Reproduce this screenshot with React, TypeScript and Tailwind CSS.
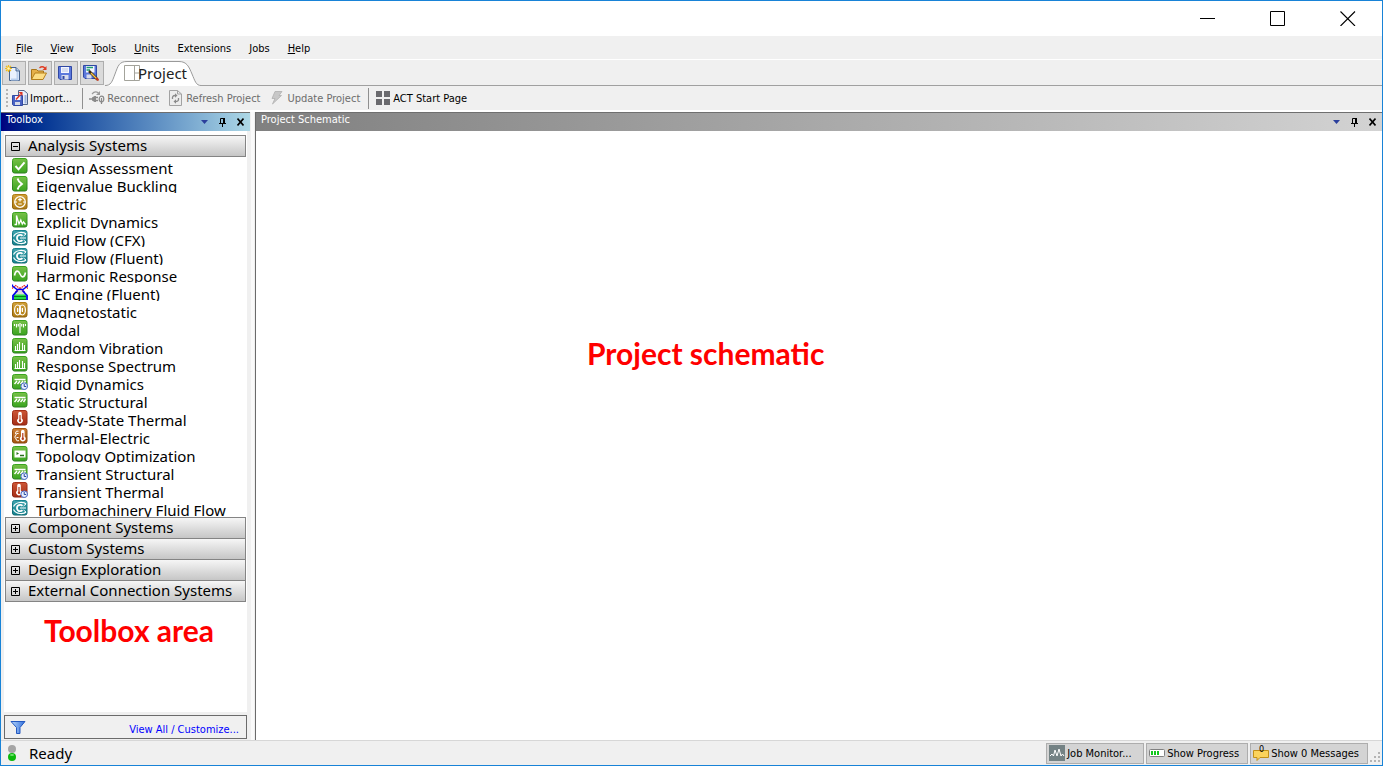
import React, { ReactNode } from "react";

type SystemIcon =
  | "check" | "chevron" | "electric" | "explicit" | "fluid" | "harmonic" | "engine" | "magnet" | "modal"
  | "bars" | "rigid" | "static" | "thermal" | "thermoelectric" | "topology" | "transientThermal";

const analysisSystems: { label: string; icon: SystemIcon }[] = [
  { label: "Design Assessment", icon: "check" },
  { label: "Eigenvalue Buckling", icon: "chevron" },
  { label: "Electric", icon: "electric" },
  { label: "Explicit Dynamics", icon: "explicit" },
  { label: "Fluid Flow (CFX)", icon: "fluid" },
  { label: "Fluid Flow (Fluent)", icon: "fluid" },
  { label: "Harmonic Response", icon: "harmonic" },
  { label: "IC Engine (Fluent)", icon: "engine" },
  { label: "Magnetostatic", icon: "magnet" },
  { label: "Modal", icon: "modal" },
  { label: "Random Vibration", icon: "bars" },
  { label: "Response Spectrum", icon: "bars" },
  { label: "Rigid Dynamics", icon: "rigid" },
  { label: "Static Structural", icon: "static" },
  { label: "Steady-State Thermal", icon: "thermal" },
  { label: "Thermal-Electric", icon: "thermoelectric" },
  { label: "Topology Optimization", icon: "topology" },
  { label: "Transient Structural", icon: "rigid" },
  { label: "Transient Thermal", icon: "transientThermal" },
  { label: "Turbomachinery Fluid Flow", icon: "fluid" },
];

const collapsedGroups = ["Component Systems", "Custom Systems", "Design Exploration", "External Connection Systems"];

function Clock() {
  return (
    <g>
      <circle cx="12.2" cy="12.2" r="3.3" fill="#e8effd" stroke="#4a6cd0" />
      <path d="M12.2 10V12.5H14.200" stroke="#24479f" fill="none" />
    </g>
  );
}

function Thermometer({ x }: { x: number }) {
  return (
    <g transform={`translate(${x} 0)`}>
      <path d="M-1.8 3.5a1.8 1.8 0 0 1 3.6 0V8.4a2.8 2.8 0 1 1-3.6 0z" fill="#fff" />
      <path d="M0 5V10.5" stroke="#b23a1c" strokeWidth="1.2" />
      <circle cx="0" cy="10.7" r="1.2" fill="#b23a1c" />
    </g>
  );
}

const hatch = (
  <path d="M2.5 5.5H13.5M2.500 10l2.5-3M5.500 10l2.5-3M8.500 10l2.5-3M11.500 10l2-3" stroke="#fff" strokeWidth="1.4" fill="none" />
);

const glyphs: Record<SystemIcon, { color: string; art: ReactNode }> = {
  check: { color: "green", art: <path d="M3.5 8l3 3.3 6-7" stroke="#fff" strokeWidth="2" fill="none" /> },
  chevron: { color: "green", art: <path d="M5.5 2.5l1.5 3 3 2.5-3 2.5-1.5 3" stroke="#fff" strokeWidth="1.8" fill="none" /> },
  electric: {
    color: "gold",
    art: (
      <g stroke="#fff" fill="none">
        <circle cx="8" cy="8" r="5.300" strokeWidth="1.200" />
        <path d="M8 4V7.400M6.200 5.600H9.800M6.200 10H9.800M3 8H5M11 8H13" strokeWidth="1.200" />
      </g>
    ),
  },
  explicit: { color: "green", art: <path d="M2.500 12.500H4.500V3.500L7 12l1.800-4 1.500 4 1.200-2 2 2.500" stroke="#fff" strokeWidth="1.3" fill="none" /> },
  fluid: {
    color: "teal",
    art: (
      <g stroke="#fff" fill="none">
        <path d="M1.500 6.500Q3.500 2.800 8 2.500T14 4M1.500 9.500Q3.500 13.200 8 13.500T14 12" strokeWidth="1.200" />
        <path d="M10.500 5.800A3.200 3.200 0 1 0 10.500 10.200" strokeWidth="1.800" />
        <path d="M8 8H14M11.500 6L14 4M11.500 10L14 12" />
      </g>
    ),
  },
  harmonic: { color: "green", art: <path d="M2.5 9.5C3.5 4 6.2 3.8 8 8s4.500 3.800 5.500-1.500" stroke="#fff" strokeWidth="1.6" fill="none" /> },
  engine: { color: "none", art: null },
  magnet: {
    color: "gold",
    art: (
      <g stroke="#fff" fill="none" strokeWidth="1.200">
        <ellipse cx="5.600" cy="8" rx="3" ry="5" />
        <ellipse cx="10.400" cy="8" rx="3" ry="5" />
        <path d="M8 3V13M5.600 6V10M10.400 6V10" />
      </g>
    ),
  },
  modal: { color: "green", art: <path d="M2.500 4V6M4.500 4V7.500M6.300 4V6.500M8 3V13M9.700 4V6.500M11.500 4V7.500M13.500 4V6" stroke="#fff" fill="none" strokeWidth="1.100" /> },
  bars: { color: "green", art: <path d="M3.500 8V12M5.500 6V12M7.500 4V12M10.500 5V12M12.500 7V12M2.500 12.500H13.500" stroke="#fff" fill="none" strokeWidth="1.100" /> },
  rigid: { color: "green", art: <>{hatch}<Clock /></> },
  static: { color: "green", art: hatch },
  thermal: { color: "red", art: <Thermometer x={8} /> },
  thermoelectric: {
    color: "orange",
    art: (
      <g>
        <path d="M6.500 3.200a2.300 2.300 0 0 0-3 1.800q0 1.200 1 1.800-2 .8-1.500 2.700.2 1 1.200 1.200-.5 1.500 1 2H7" stroke="#fff" fill="none" />
        <path d="M4.500 5.500H6.500M4.500 9.500H6.500" stroke="#fff" />
        <Thermometer x={10.8} />
      </g>
    ),
  },
  topology: {
    color: "green",
    art: (
      <g>
        <path d="M2.500 4.500H13.500V11.500H2.500z" fill="#fff" />
        <path d="M4.500 6l2.500 1.500-2.500 1.500z" fill="#276f18" />
        <path d="M8 9.500H12" stroke="#276f18" strokeWidth="1.500" />
      </g>
    ),
  },
  transientThermal: { color: "red", art: <><Thermometer x={7} /><Clock /></> },
};

function SystemGlyph({ icon }: { icon: SystemIcon }) {
  if (icon === "engine") {
    return (
      <svg className="size-4 shrink-0" viewBox="0 0 16 16" aria-hidden="true">
        <path d="M2 11L5.500 7H10.500L14 11z" fill="#d8dcd8" />
        <path d="M0 4.500L3.500 1.500 8 4.500 12.500 8M16 4.500L12.500 1.500 8 4.500 3.500 8" stroke="#f02020" strokeWidth="1.300" strokeDasharray="1.500 0.600" fill="none" />
        <path d="M.5 .5V2L5 5.500H11L15.500 2V.5" stroke="#0000f0" strokeWidth="1.300" fill="none" />
        <path d="M2 10.500H14V16H2z" fill="#22dc48" />
        <path d="M2 12.500H14M2 15.500H14" stroke="#087a20" />
        <path d="M1 16V11.500L5.500 6.500M15 16V11.500L10.500 6.500" stroke="#0000f0" strokeWidth="1.800" fill="none" />
      </svg>
    );
  }
  const { color, art } = glyphs[icon];
  return (
    <svg className="size-4 shrink-0" viewBox="0 0 16 16" aria-hidden="true">
      <rect x="0.500" y="0.500" width="14.500" height="14.500" rx="2" fill={`url(#tile-${color})`} stroke={`url(#edge-${color})`} />
      {art}
    </svg>
  );
}

const tiles = [
  ["green", "#78c048", "#3aa51f", "#2b7c1f"],
  ["gold", "#d0a03a", "#b07c12", "#8a5c0c"],
  ["teal", "#3fa3ac", "#178390", "#0f6670"],
  ["red", "#cc5636", "#a62e16", "#862010"],
  ["orange", "#cc7c32", "#a4560e", "#84440c"],
];

function TileGradients() {
  return (
    <svg className="absolute size-0" aria-hidden="true">
      <defs>
        {tiles.map(([name, top, bottom, edge]) => (
          <React.Fragment key={name}>
            <linearGradient id={`tile-${name}`} x1="0" y1="0" x2="0" y2="1">
              <stop offset="0" stopColor={top} />
              <stop offset="1" stopColor={bottom} />
            </linearGradient>
            <linearGradient id={`edge-${name}`} x1="0" y1="0" x2="0" y2="1">
              <stop offset="0" stopColor={bottom} />
              <stop offset="1" stopColor={edge} />
            </linearGradient>
          </React.Fragment>
        ))}
      </defs>
    </svg>
  );
}

function NewIcon() {
  return (
    <svg className="size-4" viewBox="0 0 16 16" aria-hidden="true">
      <path d="M4.500 2.500H11L14.500 6V15.500H4.500z" fill="#eaf2fd" stroke="#47648e" />
      <path d="M12.500 7V14.500H6" stroke="#b9d0ee" strokeWidth="2" fill="none" />
      <path d="M11 2.500V6H14.500" fill="#b6cdec" stroke="#47648e" />
      <path d="M3.500 0V7M0 3.500H7M1 1L6 6M6 1L1 6" stroke="#f0bb1c" strokeWidth="1.200" />
      <circle cx="3.500" cy="3.500" r="1.300" fill="#fff6b8" />
    </svg>
  );
}

function OpenIcon() {
  return (
    <svg className="size-4" viewBox="0 0 16 16" aria-hidden="true">
      <path d="M.5 14.500V4.500H5.500L7 6H12.500V8" fill="#e5b04a" stroke="#a87418" />
      <path d="M.5 14.500L4 8H15.500L12 14.500z" fill="#fcdd84" stroke="#b5801c" />
      <path d="M8.500 3Q11 .5 14 3" stroke="#e03a20" strokeWidth="1.200" fill="none" />
      <path d="M15.500 1V5H11.500z" fill="#e03a20" />
    </svg>
  );
}

function SaveIcon() {
  return (
    <svg className="size-4" viewBox="0 0 16 16" aria-hidden="true">
      <path d="M1.500 1.500H14.500V14.500H3L1.500 13z" fill="#5b78dc" stroke="#3048a4" />
      <path d="M4 2H12V8H4z" fill="#f4f6ff" />
      <path d="M5 4H11M5 6H11" stroke="#b9c4e4" />
      <path d="M4.500 10H11.500V14.500H4.500z" fill="#d8dcec" />
      <path d="M5.500 11H7.500V14H5.500z" fill="#3048a4" />
    </svg>
  );
}

function SaveAsIcon() {
  return (
    <svg className="size-4" viewBox="0 0 16 16" aria-hidden="true">
      <path d="M.5 .5H13.500V13.500H2L.5 12z" fill="#5b78dc" stroke="#3048a4" />
      <path d="M3 1H11.500V7.500H3z" fill="#f4f6ff" />
      <path d="M3.500 9.500H8.500V13.500H3.500z" fill="#d8dcec" />
      <path d="M3.500 2.500H10M3.500 5H7" stroke="#1c9a72" strokeWidth="1.500" />
      <path d="M6 6L14.500 14.500" stroke="#3a2a10" strokeWidth="2.500" />
      <path d="M8 8L13.500 13.500" stroke="#f3c04a" strokeWidth="1.500" />
      <path d="M13 13L15.500 15.500" stroke="#c83c20" strokeWidth="2" />
    </svg>
  );
}

function ImportIcon() {
  return (
    <svg className="size-4" viewBox="0 0 16 16" aria-hidden="true">
      <path d="M6.500 .5H12L15.500 3.500V14.500H6.500z" fill="#e8effb" stroke="#51658c" />
      <path d="M13.500 5V13.500" stroke="#9db3dc" strokeWidth="2" />
      <path d="M.5 5.500H10.500V15.500H1.500L.5 14.500z" fill="#4a63c4" stroke="#3048a4" />
      <path d="M3 6H8.500V10H3z" fill="#f4f6ff" />
      <path d="M3 12H8V15H3z" fill="#d4d8e6" />
      <path d="M4 9.500L8.500 4.500" stroke="#df3420" strokeWidth="1.500" />
      <path d="M6.500 2H10.500V6z" fill="#df3420" />
    </svg>
  );
}

function ReconnectIcon() {
  return (
    <svg className="size-4" viewBox="0 0 16 16" fill="none" aria-hidden="true">
      <path d="M3 4Q6 .5 9.500 3" stroke="#9a9a9a" strokeWidth="1.200" />
      <path d="M11 1V5H7z" fill="#9a9a9a" />
      <path d="M0 9H3M7 7.500H9M7 10.500H9" stroke="#8a8a8a" strokeWidth="1.300" />
      <path d="M7 6H5.500L3 7.500V10.500L5.500 12H7z" fill="#8a8a8a" />
      <ellipse cx="12.500" cy="9" rx="2.300" ry="2.800" stroke="#8a8a8a" strokeWidth="1.200" />
      <path d="M12.500 8V14" stroke="#8a8a8a" strokeWidth="1.200" />
    </svg>
  );
}

function RefreshIcon() {
  return (
    <svg className="size-4" viewBox="0 0 16 16" fill="none" aria-hidden="true">
      <path d="M1.500 .5H9.500L13.500 4V15.500H1.500z" fill="#ececec" stroke="#a2a2a2" />
      <path d="M9.500 .5V4H13.500" stroke="#a2a2a2" />
      <path d="M4.500 9Q4 5.500 7 5.500M10.500 8Q11 11.500 8 11.500" stroke="#8a8a8a" strokeWidth="1.300" />
      <path d="M7 3.300L9.500 5.500 7 7.700zM8 9.300L5.500 11.500 8 13.700z" fill="#8a8a8a" />
    </svg>
  );
}

function UpdateIcon() {
  return (
    <svg className="size-4" viewBox="0 0 16 16" aria-hidden="true">
      <path d="M6 1.500H13L10 5.500H12.500L3.500 14 6 8.500H3z" fill="#c8c8c8" stroke="#b0b0b0" strokeWidth="0.800" />
    </svg>
  );
}

function ActIcon() {
  return (
    <svg className="size-4" viewBox="0 0 16 16" fill="#6a6a6e" aria-hidden="true">
      <path d="M1 1H7V7H1zM9 1H15V7H9zM1 9H7V15H1zM9 9H15V15H9z" />
    </svg>
  );
}

function ExpandGlyph({ open }: { open: boolean }) {
  return (
    <svg className="size-[9px] shrink-0" viewBox="0 0 9 9" fill="none" stroke="#000" aria-hidden="true">
      <path d="M.5 .5H8.500V8.500H.5z" />
      <path d={open ? "M2 4.500H7" : "M2 4.500H7M4.500 2V7"} />
    </svg>
  );
}

function PanelControls({ name }: { name: string }) {
  return (
    <div className="flex items-center gap-2">
      <button aria-label={`${name} options`} className="flex size-[10px] items-center justify-center">
        <svg className="h-1 w-[7px]" viewBox="0 0 7 4" aria-hidden="true">
          <path d="M0 0H7L3.500 4z" fill="#2b3f9c" />
        </svg>
      </button>
      <button aria-label={`Pin ${name}`} className="flex size-[10px] items-center justify-center">
        <svg className="h-[9px] w-[7px]" viewBox="0 0 7 9" fill="none" stroke="#000" aria-hidden="true">
          <path d="M1.500 5V.5H5M0 5.500H7M3.500 6V9" />
          <path d="M5 0V5" strokeWidth="2" />
        </svg>
      </button>
      <button aria-label={`Close ${name}`} className="flex size-[10px] items-center justify-center">
        <svg className="h-2 w-[7px]" viewBox="0 0 7 8" stroke="#000" strokeWidth="1.600" aria-hidden="true">
          <path d="M.5 .5L6.500 7.500M6.500 .5L.5 7.500" />
        </svg>
      </button>
    </div>
  );
}

function GroupHeader({ label, open = false }: { label: string; open?: boolean }) {
  return (
    <button
      aria-expanded={open}
      className="flex h-[22px] w-full items-center gap-2 border border-[#848484] bg-linear-to-b from-[#f6f6f6] to-[#c6c6c6] pl-[5px] text-left font-['Noto_Sans',sans-serif] text-[15px] leading-[18px]"
    >
      <ExpandGlyph open={open} />
      <span className="pb-[2px] whitespace-nowrap">{label}</span>
    </button>
  );
}

function IconButton({ label, children }: { label: string; children: ReactNode }) {
  return (
    <button aria-label={label} className="flex size-6 items-center justify-center border border-[#adadad] bg-[#dadada] pr-[2px]">
      {children}
    </button>
  );
}

function ToolButton({ label, icon, disabled = false }: { label: string; icon: ReactNode; disabled?: boolean }) {
  return (
    <button disabled={disabled} className="flex items-center gap-[2px] whitespace-nowrap disabled:text-[#6d6d6d]">
      {icon}
      <span className="pt-[2px]">{label}</span>
    </button>
  );
}

function StatusButton({ label, icon }: { label: string; icon: ReactNode }) {
  return (
    <button className="flex h-[21px] min-w-[98px] items-center gap-[2px] border border-[#adadad] bg-[#d4d4d4] pr-2 pl-[2px] whitespace-nowrap">
      {icon}
      <span className="pt-[2px]">{label}</span>
    </button>
  );
}

const menus = ["File", "View", "Tools", "Units", "Extensions", "Jobs", "Help"];
const menusWithoutMnemonic = ["Extensions", "Jobs"];

export default function App() {
  return (
    <div className="flex h-screen flex-col border border-[#1883d7] bg-[#f0f0f0] font-['DejaVu_Sans_Condensed','Noto_Sans',sans-serif] text-[11px] leading-4 text-black">
      <TileGradients />
      <header className="flex h-[35px] shrink-0 items-center justify-end gap-[54px] bg-white pr-[26px] pb-[2px]">
        <button aria-label="Minimize">
          <svg className="size-4" viewBox="0 0 16 16" aria-hidden="true"><path d="M0 8.500H15" stroke="#000" /></svg>
        </button>
        <button aria-label="Maximize">
          <svg className="size-4" viewBox="0 0 16 16" aria-hidden="true"><path d="M.5 1.500H14.500V15.500H.5z" fill="none" stroke="#000" /></svg>
        </button>
        <button aria-label="Close">
          <svg className="size-4" viewBox="0 0 16 16" aria-hidden="true"><path d="M.5 1.500L15 16M15 1.500L.5 16" stroke="#000" strokeWidth="1.100" /></svg>
        </button>
      </header>

      <nav className="flex h-6 shrink-0 items-center border-b border-white pt-[2px] pl-[6px]">
        {menus.map((m) => (
          <button key={m} className="px-[9px]">
            {menusWithoutMnemonic.includes(m) ? m : <><span className="underline">{m[0]}</span>{m.slice(1)}</>}
          </button>
        ))}
      </nav>

      <div className="flex h-[26px] shrink-0 pl-px">
        <div className="flex gap-[2px] pt-px">
          <IconButton label="New"><NewIcon /></IconButton>
          <IconButton label="Open"><OpenIcon /></IconButton>
          <IconButton label="Save"><SaveIcon /></IconButton>
          <IconButton label="Save As"><SaveAsIcon /></IconButton>
        </div>
        <button className="relative ml-px h-[26px] w-24 shrink-0">
          <svg className="absolute inset-0 h-[26px] w-24" viewBox="0 0 96 26" aria-hidden="true">
            <path d="M0 25.500C6 25.500 7 22 10 14C13 6 14 1.500 22 1.500H74C82 1.500 84 7 87 14C90 21 91 25.500 96 25.500V26H0z" fill="#fff" />
            <path d="M0 25.500C6 25.500 7 22 10 14C13 6 14 1.500 22 1.500H74C82 1.500 84 7 87 14C90 21 91 25.500 96 25.500" fill="none" stroke="#9a9a9a" />
          </svg>
          <span className="relative flex h-full items-center pl-[19px] font-['Noto_Sans',sans-serif] text-[15px] text-[#222]">
            <svg className="-mr-[2px] size-4 shrink-0" viewBox="0 0 16 16" fill="none" stroke="#a3a39b" aria-hidden="true">
              <path d="M.5 .5H15.500V15.500H.5zM10.500 .5V15.500M10.500 8H15.500" />
            </svg>
            Project
          </span>
        </button>
        <div className="flex-1 border-b border-[#a0a0a0]" />
      </div>

      <div className="flex h-[26px] shrink-0 items-center border-b-2 border-white pl-1">
        <svg className="mr-[3px] h-[18px] w-1" viewBox="0 0 4 18" fill="#b4b4b4" aria-hidden="true">
          <path d="M1 0H3V2H1zM1 4H3V6H1zM1 8H3V10H1zM1 12H3V14H1zM1 16H3V18H1z" />
        </svg>
        <ToolButton label="Import..." icon={<ImportIcon />} />
        <div className="mr-[6px] ml-[10px] h-[21px] w-px bg-[#8f8f8f]" />
        <div className="flex items-center gap-[9px]">
          <ToolButton label="Reconnect" icon={<ReconnectIcon />} disabled />
          <ToolButton label="Refresh Project" icon={<RefreshIcon />} disabled />
          <ToolButton label="Update Project" icon={<UpdateIcon />} disabled />
        </div>
        <div className="mr-[6px] ml-2 h-[21px] w-px bg-[#8f8f8f]" />
        <ToolButton label="ACT Start Page" icon={<ActIcon />} />
      </div>

      <div className="flex min-h-0 flex-1">
        <aside className="flex w-[249px] shrink-0 flex-col">
          <div className="flex h-[19px] shrink-0 items-center justify-between border-t border-[#6f6f6f] bg-linear-to-r from-[#000080] to-[#add8e6] px-[5px]">
            <h2 className="pb-1 text-white">Toolbox</h2>
            <PanelControls name="Toolbox" />
          </div>
          <div className="mx-[3px] flex-1 bg-white px-px pt-1">
            <GroupHeader label="Analysis Systems" open />
            <ul>
              {analysisSystems.map(({ label, icon }) => (
                <li key={label} className="h-[18px] overflow-hidden">
                  <button className="flex h-[18px] w-full items-start gap-2 pt-px pl-[7px] text-left font-['Noto_Sans',sans-serif] text-[15px] leading-[21px] whitespace-nowrap">
                    <SystemGlyph icon={icon} />
                    {label}
                  </button>
                </li>
              ))}
            </ul>
            <div className="flex flex-col -space-y-px">
              {collapsedGroups.map((g) => <GroupHeader key={g} label={g} />)}
            </div>
            <p className="pt-2 pl-[39px] font-['Lato',sans-serif] text-[30px] leading-10 font-bold text-[#ff0000]">Toolbox area</p>
          </div>
          <div className="mx-[3px] mt-[3px] mb-px flex h-6 shrink-0 items-center justify-between border border-[#6b6b6b] px-[5px]">
            <button aria-label="Filter">
              <svg className="size-4" viewBox="0 0 16 16" aria-hidden="true">
                <defs>
                  <linearGradient id="funnel" x1="0" x2="1"><stop offset="0" stopColor="#b9d8fa" /><stop offset="1" stopColor="#2f6ddc" /></linearGradient>
                </defs>
                <path d="M1 2.500H15L10 8.500V14.500H6.500V8.500z" fill="url(#funnel)" stroke="#2459c0" />
              </svg>
            </button>
            <a href="#customize" className="pt-[6px] pr-[2px] text-[#0000ff]">View All / Customize...</a>
          </div>
        </aside>
        <div className="w-[5px] shrink-0 border-x border-[#f0f0f0] bg-[#fafafa]" />
        <main className="flex min-w-0 flex-1 flex-col border-l border-[#6b6b6b] bg-white">
          <div className="flex h-[19px] shrink-0 items-center justify-between border-t border-[#6f6f6f] bg-linear-to-r from-[#808080] to-[#d3d3d3] px-[5px]">
            <h2 className="pb-1 text-white">Project Schematic</h2>
            <PanelControls name="Project Schematic" />
          </div>
          <p className="pt-[202px] pl-[331px] font-['Lato',sans-serif] text-[30px] leading-10 font-bold text-[#ff0000]">Project schematic</p>
        </main>
      </div>

      <footer className="flex h-[25px] shrink-0 items-center justify-between border-t border-[#d7d7d7] pl-[6px]">
        <div className="flex items-center gap-3 font-['Noto_Sans',sans-serif] text-[15px]">
          <svg className="h-4 w-[10px]" viewBox="0 0 10 16" aria-hidden="true">
            <circle cx="5" cy="4" r="4" fill="#a5a5a5" />
            <circle cx="5" cy="12" r="4" fill="#0bb80b" />
            <ellipse cx="5" cy="10" rx="2" ry="1" fill="#6fe36f" />
          </svg>
          Ready
        </div>
        <div className="flex items-center gap-[2px]">
          <StatusButton
            label="Job Monitor..."
            icon={
              <svg className="size-4" viewBox="0 0 16 16" aria-hidden="true">
                <path d="M0 0H16V16H0z" fill="#748284" />
                <path d="M1 11L3 9 4.500 11 6 5 8 11 10 4 12 11 13.500 9 15 11" fill="none" stroke="#fff" />
              </svg>
            }
          />
          <StatusButton
            label="Show Progress"
            icon={
              <svg className="size-4" viewBox="0 0 16 16" aria-hidden="true">
                <rect x="0.500" y="4.500" width="15" height="7" rx="1" fill="#fff" stroke="#808080" />
                <path d="M2 6H4V10H2zM5 6H7V10H5zM8 6H10V10H8z" fill="#12c81c" />
              </svg>
            }
          />
          <StatusButton
            label="Show 0 Messages"
            icon={
              <svg className="size-4" viewBox="0 0 16 16" aria-hidden="true">
                <path d="M.5 5.500H15.500V12.500H7L4 15.500V12.500H.5z" fill="#fbd35c" stroke="#c29018" />
                <text x="8.500" y="7" textAnchor="middle" fontSize="9">0</text>
              </svg>
            }
          />
          <svg className="mt-2 size-3" viewBox="0 0 12 12" fill="#b4b4b4" aria-hidden="true">
            <path d="M8 1H10V3H8zM8 5H10V7H8zM4 5H6V7H4zM8 9H10V11H8zM4 9H6V11H4zM0 9H2V11H0z" />
          </svg>
        </div>
      </footer>
    </div>
  );
}
